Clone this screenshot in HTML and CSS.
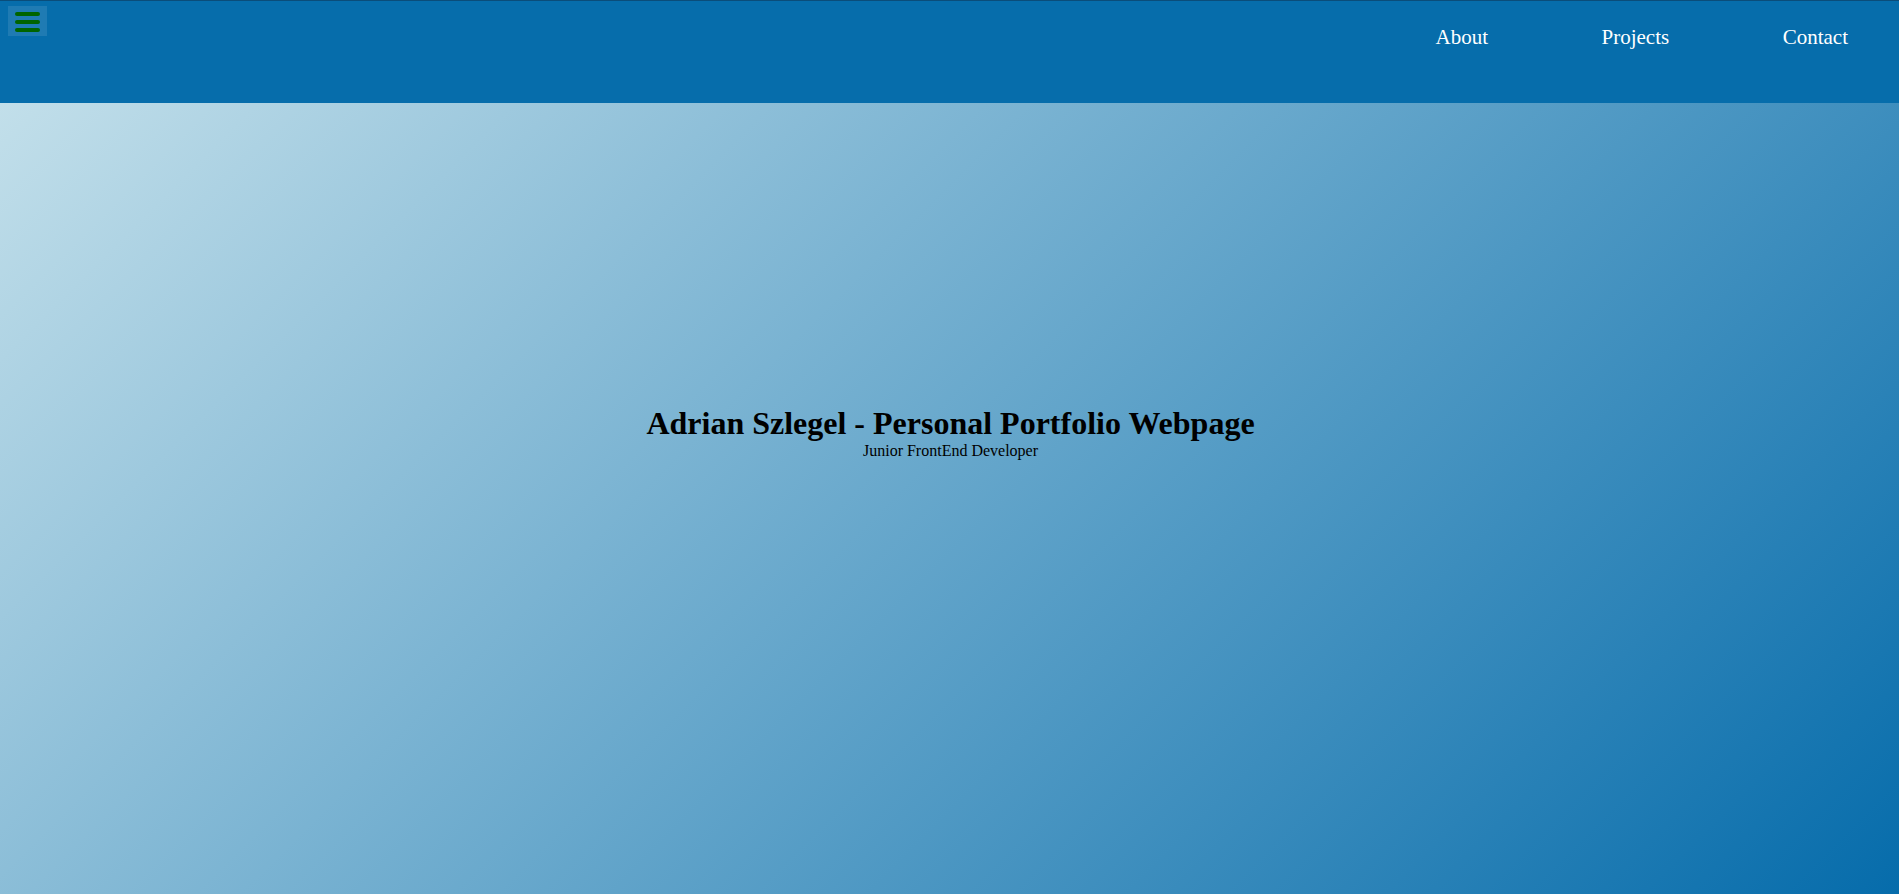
FILE: index.html
```html
<!DOCTYPE html>
<html lang="en">
<head>
<meta charset="utf-8">
<title>Adrian Szlegel - Personal Portfolio Webpage</title>
<link rel="stylesheet" href="styles.css">
</head>
<body>
<header class="site-header">
  <button class="menu-toggle" aria-label="Menu">
    <span class="bar"></span>
    <span class="bar"></span>
    <span class="bar"></span>
  </button>
  <nav class="main-nav">
    <a href="#about" class="nav-link">About</a>
    <a href="#projects" class="nav-link">Projects</a>
    <a href="#contact" class="nav-link">Contact</a>
  </nav>
</header>
<main class="hero">
  <h1 class="hero-title">Adrian Szlegel - Personal Portfolio Webpage</h1>
  <p class="hero-subtitle">Junior FrontEnd Developer</p>
</main>
</body>
</html>
```

FILE: styles.css
```css
html, body {
  margin: 0;
  padding: 0;
}

body {
  font-family: "Liberation Serif", "Times New Roman", serif;
  color: #000;
}

.site-header {
  box-sizing: border-box;
  height: 103px;
  background: #066dab;
  border-top: 1px solid #0a4d7a;
  display: flex;
  justify-content: space-between;
  align-items: flex-start;
}

.menu-toggle {
  box-sizing: border-box;
  margin: 5px 0 0 8px;
  width: 39px;
  height: 30px;
  padding: 6px 7px 4px;
  border: none;
  background: rgba(255, 255, 255, 0.1);
  display: flex;
  flex-direction: column;
  justify-content: space-between;
  cursor: pointer;
}

.bar {
  display: block;
  width: 25px;
  height: 4px;
  border-radius: 2px;
  background: #006400;
}

.main-nav {
  display: flex;
  gap: 113.5px;
  margin-top: 24px;
  padding-right: 51px;
}

.nav-link {
  color: #fff;
  text-decoration: none;
  font-size: 21px;
  line-height: normal;
}

.hero {
  box-sizing: border-box;
  min-height: calc(100vh - 103px);
  padding: 302px 0 0 2px;
  background: linear-gradient(135deg, #c2dfea, #066cab);
  text-align: center;
}

.hero-title {
  margin: 0;
  font-size: 32px;
  font-weight: bold;
  line-height: normal;
}

.hero-subtitle {
  margin: 0;
  font-size: 16px;
  line-height: normal;
}
```
